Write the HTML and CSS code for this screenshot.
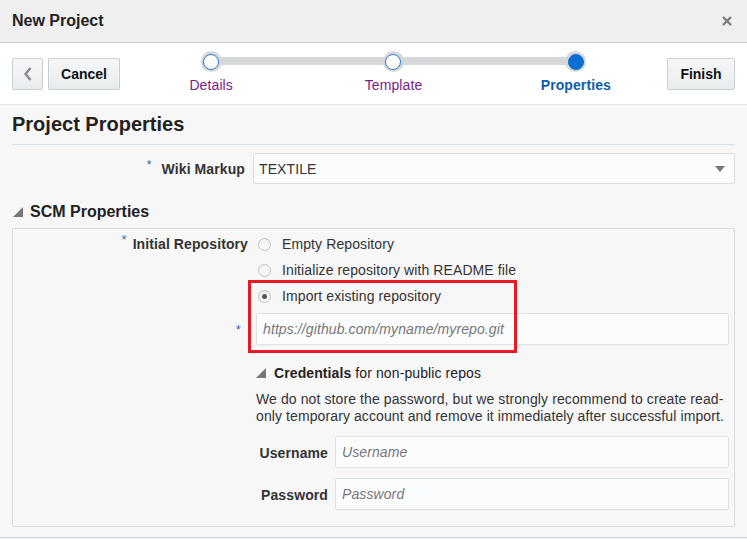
FILE: index.html
```html
<!DOCTYPE html>
<html lang="en">
<head>
<meta charset="utf-8">
<title>New Project</title>
<link rel="stylesheet" href="styles.css">
</head>
<body>
<div class="dialog">
  <header class="dlg-header">
    <h1 class="dlg-title">New Project</h1>
    <svg class="close" width="12" height="12" viewBox="0 0 12 12"><path d="M2 2 L10 10 M10 2 L2 10" stroke="#7d7d7d" stroke-width="2.4" fill="none"/></svg>
  </header>

  <div class="toolbar">
    <div class="left-btns">
      <button class="btn btn-back"><svg width="10" height="16" viewBox="0 0 10 16"><path d="M7.5 2 L2.5 8 L7.5 14" stroke="#8a8a8a" stroke-width="2.4" fill="none"/></svg></button>
      <button class="btn btn-cancel">Cancel</button>
    </div>
    <div class="train">
      <div class="step visited"><span class="dot"></span><span class="step-label">Details</span></div>
      <div class="step visited"><span class="dot"></span><span class="step-label">Template</span></div>
      <div class="step current"><span class="dot"></span><span class="step-label">Properties</span></div>
    </div>
    <button class="btn btn-finish">Finish</button>
  </div>

  <main class="content">
    <h2 class="page-title">Project Properties</h2>

    <div class="wiki-row">
      <label class="lbl"><span class="req">*</span>Wiki Markup</label>
      <div class="select">
        <span>TEXTILE</span>
        <svg width="10" height="6" viewBox="0 0 10 6"><path d="M0 0 H10 L5 6 Z" fill="#777"/></svg>
      </div>
    </div>

    <div class="section-head">
      <svg class="tri" width="10" height="10" viewBox="0 0 10 10"><path d="M10 0 V10 H0 Z" fill="#777"/></svg>
      <span>SCM Properties</span>
    </div>

    <section class="scm-box">
      <div class="lbl lbl-top"><span class="req">*</span>Initial Repository</div>
      <div class="radios">
        <label class="radio"><span class="rb"></span>Empty Repository</label>
        <label class="radio"><span class="rb"></span>Initialize repository with README file</label>
        <label class="radio"><span class="rb checked"></span>Import existing repository</label>
      </div>

      <div class="lbl lbl-url"><span class="req">*</span></div>
      <div class="input url"><span class="ph">https://github.com/myname/myrepo.git</span></div>

      <div class="spacer"></div>
      <div class="creds">
        <div class="creds-head">
          <svg class="tri" width="10" height="10" viewBox="0 0 10 10"><path d="M10 0 V10 H0 Z" fill="#777"/></svg>
          <span><b>Credentials</b> for non-public repos</span>
        </div>
        <p class="note">We do not store the password, but we strongly recommend to create read-only temporary account and remove it immediately after successful import.</p>
        <div class="cred-grid">
          <span class="clbl">Username</span>
          <div class="input"><span class="ph">Username</span></div>
          <span class="clbl">Password</span>
          <div class="input"><span class="ph">Password</span></div>
        </div>
      </div>

      <div class="highlight"></div>
    </section>
  </main>
  <footer class="dlg-footer"></footer>
</div>
</body>
</html>
```

FILE: styles.css
```css
* { box-sizing: border-box; }
html, body { margin: 0; padding: 0; }
body {
  font-family: "Liberation Sans", Arial, sans-serif;
  font-size: 14px;
  letter-spacing: 0.1px;
  color: #333;
  background: #f7f7f7;
  width: 747px;
  height: 539px;
  overflow: hidden;
}
.dialog { display: flex; flex-direction: column; }

.dlg-header {
  height: 43px;
  background: #efefef;
  border-bottom: 1px solid #c6ced6;
  display: flex;
  align-items: center;
  justify-content: space-between;
  padding: 0 14px 1px 12px;
}
.dlg-title { margin: 0; font-size: 16px; font-weight: bold; color: #222; letter-spacing: 0; }
.close { display: block; }

.toolbar {
  height: 62px;
  background: #fff;
  border-bottom: 1px solid #e3e7ea;
  display: flex;
  align-items: center;
  padding: 0 12px;
}
.left-btns { display: flex; gap: 5px; }
.btn {
  height: 32px;
  border: 1px solid #c8d0d6;
  border-radius: 2px;
  background: linear-gradient(#f6f7f8, #e9ecee);
  font-family: inherit;
  font-size: 14px;
  font-weight: bold;
  color: #111;
  padding: 0;
  margin-top: 1px;
}
.btn-back { width: 31px; display: flex; align-items: center; justify-content: center; }
.btn-cancel { width: 72px; }
.btn-finish { width: 68px; }

.train { flex: 1; display: flex; align-self: stretch; }
.step {
  flex: 1;
  position: relative;
  display: flex;
  flex-direction: column;
  align-items: center;
  padding-top: 8px;
}
.step::before {
  content: "";
  position: absolute;
  left: 0; right: 0;
  top: 14px;
  height: 8px;
  background: #d6d7d8;
}
.step:first-child::before { left: 50%; }
.step:last-child::before { right: 50%; }
.dot {
  position: relative;
  width: 21px; height: 21px;
  border-radius: 50%;
  background: #d6d7d8;
  display: flex;
  align-items: center;
  justify-content: center;
}
.dot::after {
  content: "";
  width: 14px; height: 14px;
  border-radius: 50%;
  background: #fff;
  border: 1.5px solid #2a7bd0;
}
.current .dot::after { background: #0b6ed0; border-color: #0b6ed0; }
.step-label { margin-top: 5px; line-height: 16px; color: #7c1d87; }
.current .step-label { color: #0b5ea8; font-weight: bold; }

.content { padding: 0 12px; flex: 1; }
.page-title {
  margin: 0;
  font-size: 20px;
  line-height: 24px;
  font-weight: bold;
  color: #222;
  letter-spacing: 0;
  padding: 7px 0 8px;
  border-bottom: 1px solid #dae1e7;
}
.req {
  color: #3a6fc0;
  font-size: 13px;
  line-height: 0;
  vertical-align: 5px;
  margin-right: 10px;
  font-weight: normal;
}

.wiki-row { display: flex; align-items: center; margin-top: 8px; gap: 8px; }
.lbl { font-weight: bold; color: #333; text-align: right; }
.wiki-row .lbl { width: 233px; line-height: 18px; }
.select {
  flex: 1;
  height: 31px;
  background: #fbfcfd;
  border: 1px solid #dcdfe1;
  border-radius: 2px;
  display: flex;
  align-items: center;
  justify-content: space-between;
  padding: 0 9px 0 5px;
  color: #333;
}

.section-head {
  display: flex;
  align-items: center;
  gap: 7px;
  margin-top: 16px;
  height: 22px;
  font-size: 16px;
  font-weight: bold;
  color: #222;
  letter-spacing: 0;
  padding-left: 1px;
  padding-top: 1px;
}
.tri { display: block; }

.scm-box {
  position: relative;
  margin-top: 6px;
  border: 1px solid #dcdcdc;
  border-radius: 2px;
  display: grid;
  grid-template-columns: 235px 1fr;
  column-gap: 8px;
  padding: 2px 5px 16px 0;
}
.lbl-top { line-height: 26px; }
.lbl-top .req { margin-right: 6px; }
.radios { display: flex; flex-direction: column; }
.radio { display: flex; align-items: center; height: 26px; color: #333; }
.rb {
  width: 13px; height: 13px;
  border-radius: 50%;
  border: 1px solid #c2c2c2;
  background: linear-gradient(#f0f0f0, #fafafa);
  margin: 0 11px 0 2px;
  display: flex;
  align-items: center;
  justify-content: center;
}
.rb.checked::after {
  content: "";
  width: 5px; height: 5px;
  border-radius: 50%;
  background: #555;
}
.lbl-url { margin-top: 5px; padding-top: 12px; }
.lbl-url .req { margin-right: 7px; }

.input {
  height: 32px;
  background: #fbfcfd;
  border: 1px solid #dde2e5;
  border-radius: 2px;
  display: flex;
  align-items: center;
  padding: 0 6px;
}
.url { margin-top: 4px; }
.ph { font-style: italic; color: #777; }

.creds { padding-top: 19px; }
.creds-head { display: flex; align-items: center; gap: 8px; height: 18px; color: #222; }
.note { margin: 9px 0 0; line-height: 17px; color: #333; }
.cred-grid {
  display: grid;
  grid-template-columns: 72px 1fr;
  column-gap: 7px;
  row-gap: 10px;
  align-items: center;
  margin-top: 11px;
}
.clbl { font-weight: bold; text-align: right; color: #333; padding-top: 2px; }

.highlight {
  position: absolute;
  left: 235px;
  top: 51px;
  width: 269px;
  height: 73px;
  border: 3px solid #e21b24;
}

.dlg-footer { height: 10px; border-top: 1px solid #c6ced6; margin-top: 10px; background: #f7f7f7; }
```
